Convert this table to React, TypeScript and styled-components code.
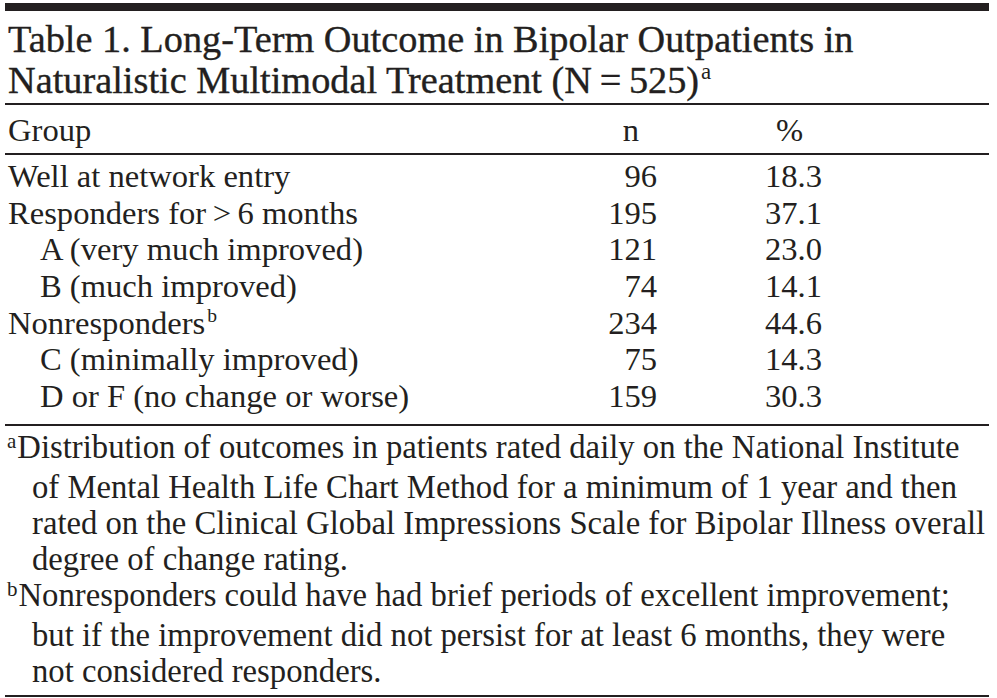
import styled, { createGlobalStyle } from 'styled-components';

const GlobalStyle = createGlobalStyle`
  html, body {
    margin: 0;
    padding: 0;
    background: #fff;
  }
  body {
    font-family: "Liberation Serif", "Times New Roman", serif;
    color: #231f20;
  }
`;

const Page = styled.div`
  width: 984px;
  margin-left: 5px;
  padding-top: 3px;
`;

const TopBar = styled.div`
  height: 8px;
  background: #231f20;
`;

const Title = styled.h1`
  margin: 8px 0 0;
  padding-left: 3px;
  font-size: 38.3px;
  line-height: 41px;
  font-weight: normal;
  white-space: nowrap;
  -webkit-text-stroke: 0.35px #231f20;
`;

const Sup = styled.sup`
  font-size: 0.6em;
  line-height: 0;
  vertical-align: 0;
  position: relative;
  top: -0.6em;
  margin-left: 2px;
  -webkit-text-stroke: 0;
`;

const Rule = styled.div<{ $gap?: number }>`
  height: 2px;
  background: #231f20;
  margin-top: ${p => p.$gap ?? 0}px;
`;

const Grid = styled.div<{ $top: number }>`
  display: grid;
  grid-template-columns: 600px 52px 165px 1fr;
  padding-top: ${p => p.$top}px;
  font-size: 32.6px;
`;

const Row = styled.div<{ $height: number }>`
  display: contents;
  line-height: ${p => p.$height}px;
`;

const Label = styled.div<{ $indent?: boolean }>`
  padding-left: ${p => (p.$indent ? 35 : 3)}px;
  white-space: nowrap;
`;

const NCell = styled.div<{ $head?: boolean }>`
  text-align: ${p => (p.$head ? 'center' : 'right')};
`;

const PctCell = styled.div<{ $head?: boolean }>`
  padding-left: 100px;
  width: 65px;
  text-align: ${p => (p.$head ? 'center' : 'right')};
`;

const Notes = styled.div`
  padding-top: 3px;
  font-size: 32.7px;
  line-height: 36px;
`;

const Note = styled.p`
  margin: 0;
  padding-left: 27px;
  text-indent: -25px;
  white-space: nowrap;
`;

const NoteMark = styled.span`
  font-size: 21px;
  position: relative;
  top: -10px;
  margin-right: 1px;
`;

const rows = [
  { label: 'Well at network entry', n: '96', pct: '18.3' },
  { label: 'Responders for\u2009>\u20096 months', n: '195', pct: '37.1' },
  { label: 'A (very much improved)', n: '121', pct: '23.0', indent: true },
  { label: 'B (much improved)', n: '74', pct: '14.1', indent: true },
  { label: 'Nonresponders', n: '234', pct: '44.6', mark: 'b' },
  { label: 'C (minimally improved)', n: '75', pct: '14.3', indent: true },
  { label: 'D or F (no change or worse)', n: '159', pct: '30.3', indent: true },
];

export default function App() {
  return (
    <>
      <GlobalStyle />
      <Page>
        <TopBar />
        <Title>
          Table 1. Long-Term Outcome in Bipolar Outpatients in
          <br />
          Naturalistic Multimodal Treatment (N{'\u2009'}={'\u2009'}525)<Sup>a</Sup>
        </Title>
        <Rule $gap={2} />
        <Grid $top={7}>
          <Row $height={37}>
            <Label>Group</Label>
            <NCell $head>n</NCell>
            <PctCell $head>%</PctCell>
            <div />
          </Row>
        </Grid>
        <Rule $gap={4} />
        <Grid $top={3}>
          {rows.map(r => (
            <Row $height={36.67} key={r.label}>
              <Label $indent={r.indent}>
                {r.label}
                {r.mark && <Sup>{r.mark}</Sup>}
              </Label>
              <NCell>{r.n}</NCell>
              <PctCell>{r.pct}</PctCell>
              <div />
            </Row>
          ))}
        </Grid>
        <Rule $gap={9} />
        <Notes>
          <Note>
            <NoteMark>a</NoteMark>Distribution of outcomes in patients rated daily on the National Institute
            <br />
            of Mental Health Life Chart Method for a minimum of 1 year and then
            <br />
            rated on the Clinical Global Impressions Scale for Bipolar Illness overall
            <br />
            degree of change rating.
          </Note>
          <Note>
            <NoteMark>b</NoteMark>Nonresponders could have had brief periods of excellent improvement;
            <br />
            but if the improvement did not persist for at least 6 months, they were
            <br />
            not considered responders.
          </Note>
        </Notes>
        <Rule $gap={6} />
      </Page>
    </>
  );
}
